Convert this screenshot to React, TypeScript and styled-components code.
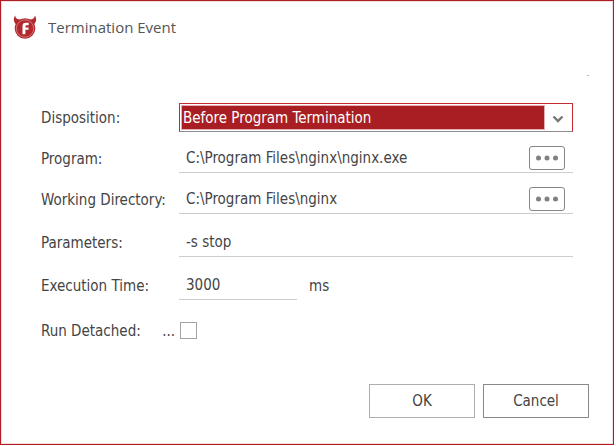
import React, { useState } from "react";
import styled, { createGlobalStyle } from "styled-components";

const GlobalStyle = createGlobalStyle`
  *, *::before, *::after { box-sizing: border-box; }
  body {
    margin: 0;
    background: #fff;
    color: #444;
    font-family: "DejaVu Sans Condensed", "Noto Sans", sans-serif;
    font-size: 15px;
    line-height: 20px;
  }
  input, select, button { font: inherit; color: inherit; }
`;

const Dialog = styled.main`
  display: flex;
  flex-direction: column;
  min-height: calc(100vh - 1px);
  margin: 0 2px 1px 0;
  border: 1px solid #b01e24;
  box-shadow: inset 0 0 0 1px #f3dcdd;
`;

const TitleBar = styled.header`
  display: flex;
  align-items: center;
  gap: 11px;
  padding: 12px 12px 0;
`;

const Title = styled.h1`
  margin: 0;
  color: #555;
  font-family: "Open Sans", sans-serif;
  font-size: 15px;
  font-weight: 400;
  line-height: 28px;
`;

const Speck = styled.span`
  align-self: flex-end;
  width: 2px;
  height: 1px;
  margin: 34px 24px 0 0;
  background: #bbb;
`;

const Form = styled.form`
  display: flex;
  flex: 1;
  flex-direction: column;
`;

const Fields = styled.div`
  display: flex;
  flex-direction: column;
  padding: 27px 40px 0;
`;

const Row = styled.div<{ $gap?: number }>`
  display: grid;
  grid-template-columns: 138px 1fr;
  align-items: center;
  min-height: 29px;
  margin-top: ${({ $gap = 0 }) => $gap}px;
`;

const Label = styled.label`
  display: flex;
  justify-content: space-between;
  padding-right: 4px;
  white-space: nowrap;
`;

const SelectBox = styled.div`
  display: flex;
  align-items: center;
  height: 29px;
  padding: 1px;
  border: 1px solid #c42a30;
  border-bottom-color: #8c8c8c;
  background: #fff;
`;

const Select = styled.select`
  flex: 1;
  min-width: 0;
  height: 25px;
  padding: 0 1px;
  border: 1px solid #e3b0b2;
  border-radius: 0;
  outline: 0;
  appearance: none;
  background: #a91e22;
  color: #fff;
`;

const Chevron = styled.svg`
  flex: none;
  width: 12px;
  height: 8px;
  margin: 3px 7px 0;
`;

const LineField = styled.div<{ $short?: boolean }>`
  display: flex;
  align-items: center;
  width: ${({ $short }) => ($short ? "118px" : "auto")};
  height: 29px;
  padding: 0 8px 1px 7px;
  border-bottom: 1px solid #cdcdcd;
`;

const TextInput = styled.input`
  flex: 1;
  min-width: 0;
  height: 26px;
  padding: 0;
  border: 0;
  outline: 0;
  background: transparent;
`;

const BrowseButton = styled.button`
  display: flex;
  flex: none;
  align-items: center;
  justify-content: center;
  width: 36px;
  height: 24px;
  padding: 0;
  border: 1px solid #858585;
  border-radius: 3px;
  background: #fff;
`;

const WithUnit = styled.div`
  display: flex;
  align-items: center;
  gap: 12px;
`;

const CheckBox = styled.input`
  width: 17px;
  height: 17px;
  margin: 0 0 0 1px;
  border: 1px solid #a3a3a3;
  appearance: none;
  background: #fff;

  &:checked { background: #a91e22; }
`;

const Footer = styled.footer`
  display: flex;
  justify-content: flex-end;
  gap: 8px;
  margin-top: auto;
  padding: 24px 24px 26px;
`;

const ActionButton = styled.button<{ $strong?: boolean }>`
  width: 106px;
  height: 34px;
  padding: 0;
  border: 1px solid ${({ $strong }) => ($strong ? "#8a8a8a" : "#adadad")};
  background: #fff;
`;

const DevilLogo = () => (
  <svg width="24" height="26" viewBox="0 0 24 26" aria-hidden="true">
    <path d="M2.200 1.500C.2 4 .3 8.500 3.500 10.500L8.500 5.500C5 6 2.200 4.800 2.200 1.500ZM21.800 1.500C23.800 4 23.700 8.500 20.500 10.500L15.500 5.500C19 6 21.800 4.800 21.800 1.500Z" fill="#b3282d" />
    <circle cx="12" cy="14.500" r="10.300" fill="#b3282d" />
    <circle cx="12" cy="14.500" r="8.700" fill="none" stroke="#dc9a9c" strokeWidth=".7" />
    <path d="M9.500 20.200V12q0-3.200 3.200-3.200h3v2.400h-2q-1.300 0-1.300 1.200v1h3.100v2.400h-3.100v4.400Z" fill="#fff" />
  </svg>
);

const Browse = ({ target }: { target: string }) => (
  <BrowseButton type="button" aria-label={`Browse for ${target}`}>
    <svg width="24" height="6" viewBox="0 0 24 6" fill="#808080" aria-hidden="true">
      <circle cx="3.500" cy="3" r="2.500" />
      <circle cx="12" cy="3" r="2.500" />
      <circle cx="20.500" cy="3" r="2.500" />
    </svg>
  </BrowseButton>
);

export default function App() {
  const [detached, setDetached] = useState(false);

  return (
    <>
      <GlobalStyle />
      <Dialog>
        <TitleBar>
          <DevilLogo />
          <Title>Termination Event</Title>
        </TitleBar>
        <Form onSubmit={(event) => event.preventDefault()}>
          <Speck aria-hidden="true" />
          <Fields>
            <Row>
              <Label htmlFor="disposition">Disposition:</Label>
              <SelectBox>
                <Select id="disposition" defaultValue="before">
                  <option value="before">Before Program Termination</option>
                </Select>
                <Chevron viewBox="0 0 12 8" aria-hidden="true">
                  <path d="M1.500 1.500 6 6l4.500-4.500" fill="none" stroke="#777" strokeWidth="2.400" />
                </Chevron>
              </SelectBox>
            </Row>
            <Row $gap={12}>
              <Label htmlFor="program">Program:</Label>
              <LineField>
                <TextInput id="program" defaultValue={"C:\\Program Files\\nginx\\nginx.exe"} />
                <Browse target="program" />
              </LineField>
            </Row>
            <Row $gap={12}>
              <Label htmlFor="directory">Working Directory:</Label>
              <LineField>
                <TextInput id="directory" defaultValue={"C:\\Program Files\\nginx"} />
                <Browse target="working directory" />
              </LineField>
            </Row>
            <Row $gap={14}>
              <Label htmlFor="parameters">Parameters:</Label>
              <LineField>
                <TextInput id="parameters" defaultValue="-s stop" />
              </LineField>
            </Row>
            <Row $gap={14}>
              <Label htmlFor="time">Execution Time:</Label>
              <WithUnit>
                <LineField $short>
                  <TextInput id="time" defaultValue="3000" />
                </LineField>
                <span>ms</span>
              </WithUnit>
            </Row>
            <Row $gap={16}>
              <Label htmlFor="detached">
                <span>Run Detached:</span>
                <span>...</span>
              </Label>
              <CheckBox
                id="detached"
                type="checkbox"
                checked={detached}
                onChange={(event) => setDetached(event.target.checked)}
              />
            </Row>
          </Fields>
          <Footer>
            <ActionButton type="submit">OK</ActionButton>
            <ActionButton type="button" $strong>Cancel</ActionButton>
          </Footer>
        </Form>
      </Dialog>
    </>
  );
}
